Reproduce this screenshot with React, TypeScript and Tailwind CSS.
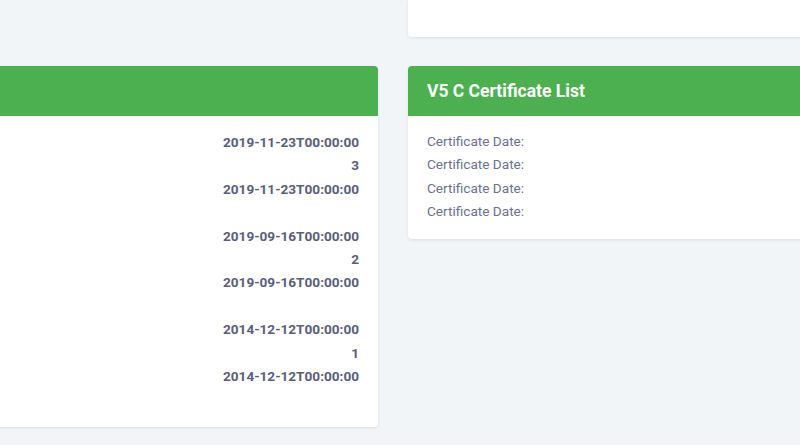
import React from 'react';

const groups = [
  ['2019-11-23T00:00:00', '3', '2019-11-23T00:00:00'],
  ['2019-09-16T00:00:00', '2', '2019-09-16T00:00:00'],
  ['2014-12-12T00:00:00', '1', '2014-12-12T00:00:00'],
];

const certs = ['', '', '', ''];

const cardCls = 'bg-white rounded-[4px] shadow-[0_1px_3px_rgba(0,0,0,0.09)]';

const App: React.FC = () => {
  return (
    <div
      className="w-[800px] h-[445px] overflow-hidden bg-[#f2f5f7]"
      style={{ fontFamily: 'Roboto, "Liberation Sans", sans-serif' }}
    >
      <div className="-ml-[10px] w-[820px] grid grid-cols-[388px_402px] gap-x-[30px] gap-y-[29px] items-start">
        {/* top card, only its lower edge shows */}
        <div className={`col-start-2 h-[37px] rounded-t-none ${cardCls}`} />

        {/* history card */}
        <div className={`col-start-1 overflow-hidden ${cardCls}`}>
          <div className="h-[50px] bg-[#4caf50]" />
          <div className="px-[19px] pt-[15px] pb-[15px] text-[13.6px] leading-[23.4px] font-bold text-[#5a5e7c]">
            {groups.map((g, i) => (
              <div key={i}>
                {g.map((v, j) => (
                  <div key={j} className="text-right">{v}</div>
                ))}
                <div className="h-[23.4px]" />
              </div>
            ))}
          </div>
        </div>

        {/* certificate list */}
        <div className={`col-start-2 overflow-hidden ${cardCls}`}>
          <div className="h-[50px] bg-[#4caf50] flex items-center px-[19px]">
            <h3 className="text-white text-[17.5px] font-bold">V5 C Certificate List</h3>
          </div>
          <div className="px-[19px] pt-[14px] pb-[15px] text-[13.6px] leading-[23.4px] text-[#6c7091]">
            {certs.map((c, i) => (
              <div key={i}>Certificate Date: {c}</div>
            ))}
          </div>
        </div>
      </div>
    </div>
  );
};

export default App;
